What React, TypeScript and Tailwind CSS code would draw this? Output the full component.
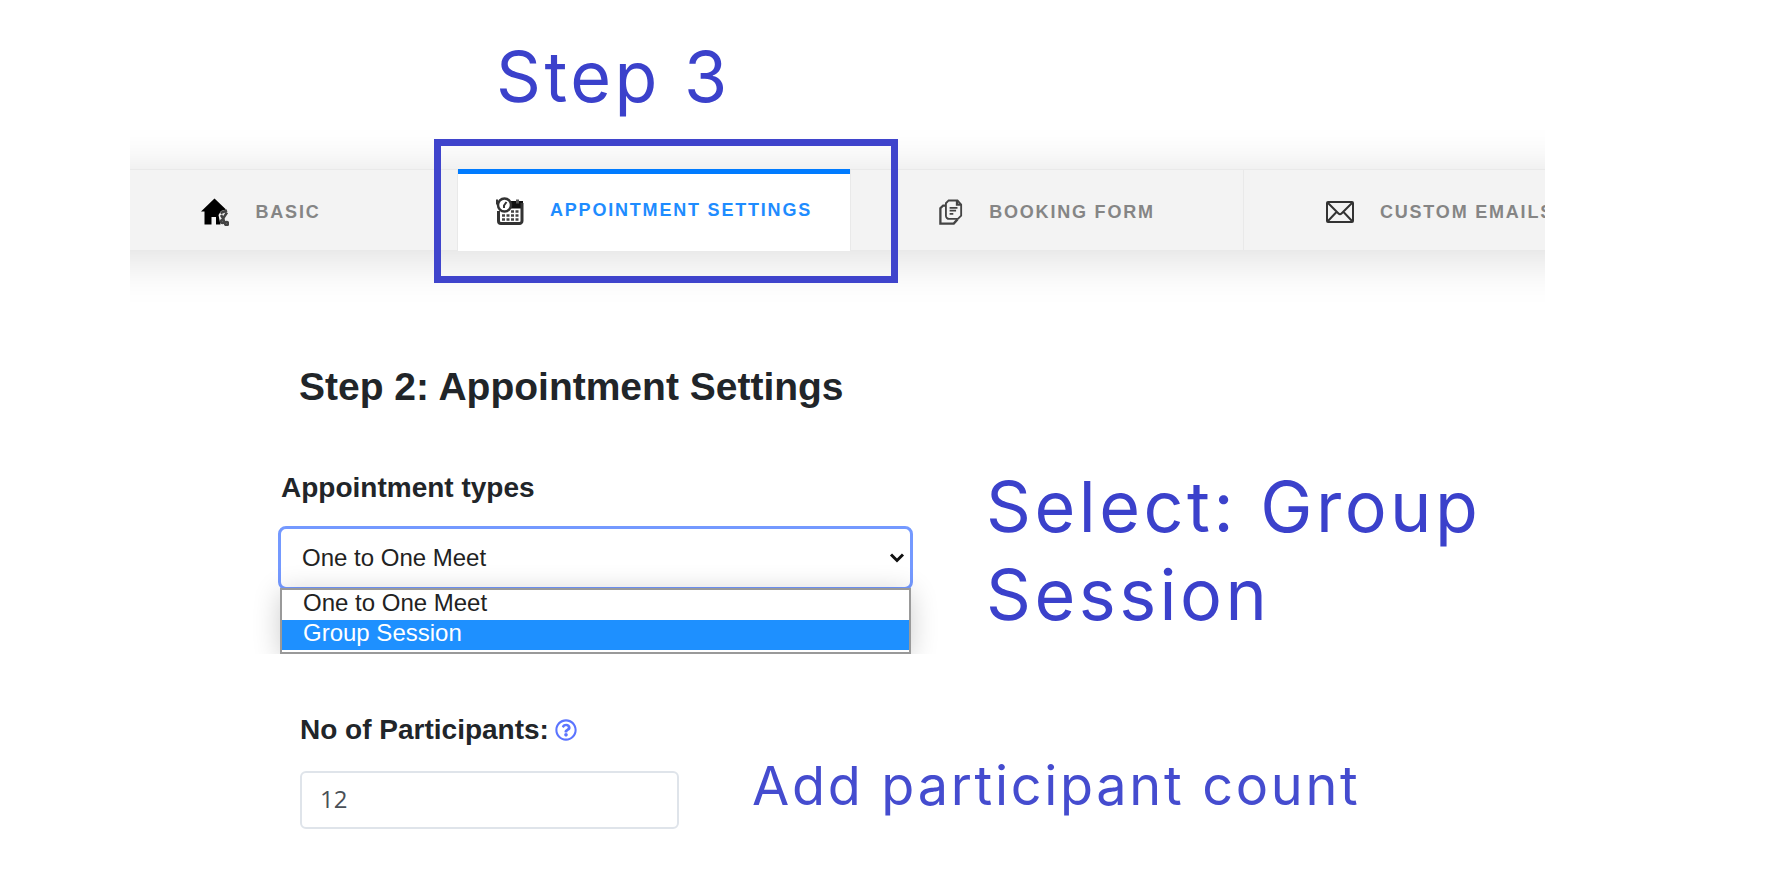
import { useState } from 'react'
import type { ReactNode } from 'react'
import { FaRegQuestionCircle } from 'react-icons/fa'

const TYPES = ['One to One Meet', 'Group Session']

function HomeIcon() {
  return (
    <svg viewBox="0 0 28 28" className="h-7 w-7 shrink-0" aria-hidden="true">
      <path d="M13.5 0.5 0 13.5H3.5V26.5H10.5V19H15V26.5H19.500L18.500 22 17.500 17 20 13 25 11.5Z" fill="#000" />
      <g fill="none" stroke="#444" strokeWidth="2.500">
        <path d="M19.500 15 26 12.500M20 17l3 5M26 14.500l-4 6" />
        <circle cx="21.500" cy="23.500" r="1.500" />
        <circle cx="25.500" cy="25.500" r="1.500" />
      </g>
    </svg>
  )
}

function CalendarIcon() {
  return (
    <svg viewBox="0 0 28 28" className="h-7 w-7 shrink-0" aria-hidden="true">
      <path d="M15 4h12v7.500H15z" fill="#111" />
      <path d="M20 2.500h3v4h-3z" fill="#555" />
      <path d="M2.500 14v10a2.500 2.500 0 0 0 2.500 2.500h18.500a2.500 2.500 0 0 0 2.500-2.500V6" fill="none" stroke="#333" strokeWidth="3" />
      <path d="M15 14.500h9M6 18.500h18M6 22.500h18" fill="none" stroke="#444" strokeWidth="2.500" strokeDasharray="3 1.500" />
      <circle cx="8.500" cy="8" r="6.500" fill="#fff" stroke="#333" strokeWidth="2.500" />
      <path d="M10.500 5 8 8.500v2.500" fill="none" stroke="#333" strokeWidth="2" />
      <path d="M1 2.500v5" stroke="#333" strokeWidth="2" />
    </svg>
  )
}

function FormIcon() {
  return (
    <svg viewBox="0 0 26 28" className="h-7 w-6 shrink-0" fill="none" stroke="#444" strokeWidth="2" aria-hidden="true">
      <path d="M10.500 1.500H20l4 4.500v12l-3.500 3.500H11A3.500 3.500 0 0 1 7.500 18V4.500Z" />
      <path d="M7.500 7H4.500L1.500 10V26.500H16L20 22" strokeWidth="2.500" />
      <path d="M19.500 1.500v4.500h4.500" strokeWidth="2.500" />
      <path d="M11.500 9.500h8.500M11.500 12.500h7M11.500 16h4" />
    </svg>
  )
}

function EnvelopeIcon() {
  return (
    <svg viewBox="0 0 28 22" className="h-[22px] w-7 shrink-0" fill="none" stroke="#333" strokeWidth="2" aria-hidden="true">
      <rect x="1" y="1" width="26" height="20" rx="1" />
      <path d="M1.500 1.500 12.500 12.500q1.500 1.500 3 0L26.500 1.500M1.500 20.500 10.500 11M26.500 20.500 17.500 11" />
    </svg>
  )
}

const tabs: { label: string; icon: ReactNode; active?: boolean }[] = [
  { label: 'Basic', icon: <HomeIcon /> },
  { label: 'Appointment Settings', icon: <CalendarIcon />, active: true },
  { label: 'Booking Form', icon: <FormIcon /> },
  { label: 'Custom Emails', icon: <EnvelopeIcon /> },
]

// The row is wider than the bar, so the first and last tabs run off its edges
function TabBar() {
  return (
    <nav className="mt-12 ml-[130px] mr-[225px] overflow-x-clip" aria-label="Setup steps">
      <ul className="-ml-[65px] grid h-[82px] w-[calc(100%+157px)] grid-cols-4 bg-[#f3f3f3] shadow-[0_6px_50px_rgba(0,0,0,0.14)]">
        {tabs.map((tab) => (
          <li key={tab.label} className="relative border-r border-[#e9e9e9]">
            <a
              href="#"
              aria-current={tab.active ? 'step' : undefined}
              className={`flex h-full items-center justify-center gap-[26px] text-[18px] font-bold uppercase tracking-widest whitespace-nowrap ${tab.active ? 'border-t-[5px] border-[#007bff] bg-white pb-1 text-[#1e8cff]' : 'border-y border-[#e9e9e9] pt-1 text-[#858585]'}`}
            >
              {tab.icon}
              {tab.label}
            </a>
            {tab.active && (
              <div className="pointer-events-none absolute -top-[30px] -right-12 -bottom-8 -left-6 z-10 border-[7px] border-[#3f44cc]" />
            )}
          </li>
        ))}
      </ul>
    </nav>
  )
}

export default function App() {
  const [type, setType] = useState(TYPES[0])
  const [count, setCount] = useState('12')

  return (
    <main className="bg-white pt-[33px] pb-14 font-['Liberation_Sans',Arial,sans-serif] text-[#212529]">
      <p className="ml-[496px] font-[Inter,sans-serif] text-[70px] leading-[88px] tracking-wider text-[#3b41cb]">Step 3</p>

      <TabBar />

      <h2 className="mt-28 ml-[299px] text-[39px] leading-[48px] font-bold">Step 2: Appointment Settings</h2>

      <section className="mt-[52px] ml-[278px] flex gap-[73px]">
        <div className="max-w-[635px] flex-1 pt-[9px]">
          <label htmlFor="type" className="ml-[3px] block text-[28px] leading-8 font-bold">Appointment types</label>
          <div className="relative mt-[22px]">
            <select
              id="type"
              value={type}
              onChange={(e) => setType(e.target.value)}
              className="block h-16 w-full appearance-none rounded-lg border-[3px] border-[#7499ff] bg-white px-[21px] text-[24px] text-[#222] outline-none"
            >
              {TYPES.map((t) => (
                <option key={t}>{t}</option>
              ))}
            </select>
            <svg viewBox="0 0 16 12" className="pointer-events-none absolute top-[26px] right-2 h-3 w-4" aria-hidden="true">
              <path d="M2 2.500 8 8.500 14 2.500" fill="none" stroke="#111" strokeWidth="3" />
            </svg>
            <ul
              role="listbox"
              aria-label="Appointment types"
              className="absolute top-[62px] right-[2px] left-[2px] border-2 border-[#999] bg-white pb-[2px] text-[24px] leading-[26px] shadow-[0_4px_28px_rgba(0,0,0,0.2)] [clip-path:inset(-30px_-30px_0_-30px)]"
            >
              <li role="option" aria-selected="false" onClick={() => setType(TYPES[0])} className="px-[21px] pb-1 text-[#222]">One to One Meet</li>
              <li role="option" aria-selected="true" onClick={() => setType(TYPES[1])} className="bg-[#1e90ff] px-[21px] pb-1 text-white">Group Session</li>
            </ul>
          </div>
        </div>
        <p className="max-w-[540px] flex-1 font-[Inter,sans-serif] text-[70px] leading-[88px] tracking-wider text-[#3b41cb]">Select: Group Session</p>
      </section>

      <section className="mt-[75px] ml-[300px] flex gap-[73px]">
        <div className="max-w-[379px] flex-1">
          <div className="flex items-center gap-[6px]">
            <label htmlFor="participants" className="text-[28px] leading-8 font-bold">No of Participants:</label>
            <button type="button" aria-label="Help" className="text-[#5b74ff]">
              <FaRegQuestionCircle className="h-[22px] w-[22px]" />
            </button>
          </div>
          <input
            id="participants"
            value={count}
            onChange={(e) => setCount(e.target.value)}
            className="mt-[25px] block h-[58px] w-full rounded-md border-2 border-[#dfe4ea] bg-white px-[18px] pb-1 font-['Open_Sans',sans-serif] text-[24px] text-[#495057] outline-none"
          />
        </div>
        <p className="mt-10 font-[Inter,sans-serif] text-[54px] leading-[64px] tracking-wider text-[#454ccf]">Add participant count</p>
      </section>
    </main>
  )
}
